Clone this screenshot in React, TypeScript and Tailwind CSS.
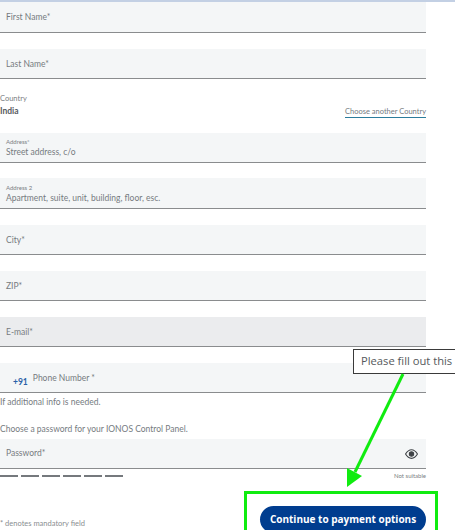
import React from 'react';

const Field = ({ label, small, bg = 'bg-[#f4f6f7]', h = 'h-[30px]', mt }: { label: string; small?: string; bg?: string; h?: string; mt: string }) => (
  <div className={`${mt} ${h} ${bg} w-[426px] border-b border-[#8a8c8e] pl-[6px] flex flex-col justify-center shrink-0`}>
    {small && <span className="text-[6px] leading-[7px] text-[#7b8084] mt-[2px]">{small}</span>}
    <span className="text-[8.5px] leading-[13px] text-[#767b7f] mt-[1px]">{label}</span>
  </div>
);

const App = () => {
  return (
    <div className="relative w-[455px] h-[530px] overflow-hidden bg-white font-['Lato',sans-serif]">
      <div className="h-[2px] bg-[#c3d0e4]" />
      <Field label="First Name*" h="h-[31px]" mt="mt-0" />
      <Field label="Last Name*" mt="mt-[16px]" />

      <div className="w-[426px] mt-[15px] flex justify-between items-end">
        <div>
          <div className="text-[7.5px] leading-[10px] text-[#7b8084]">Country</div>
          <div className="text-[8.5px] leading-[12px] mt-[1px] font-bold text-[#565a5e]">India</div>
        </div>
        <span className="text-[7.5px] leading-[11px] text-[#767b7f] border-b border-[#2c7c9c] mb-[-1px]">Choose another Country</span>
      </div>

      <Field label="Street address, c/o" small="Address*" mt="mt-[16px]" />
      <Field label="Apartment, suite, unit, building, floor, esc." small="Address 2" h="h-[31px]" mt="mt-[15px]" />
      <Field label="City*" mt="mt-[16px]" />
      <Field label="ZIP*" mt="mt-[16px]" />
      <Field label="E-mail*" bg="bg-[#ebecee]" mt="mt-[16px]" />

      <div className="mt-[16px] h-[30px] w-[426px] bg-[#f4f6f7] border-b border-[#8a8c8e] flex shrink-0">
        <span className="ml-[13px] mt-[14px] text-[8.5px] leading-[11px] font-bold text-[#2b62a8]">+91</span>
        <span className="ml-[5px] mt-[9px] text-[8.5px] leading-[12px] text-[#767b7f]">Phone Number *</span>
      </div>

      <div className="mt-[4px] text-[8.5px] leading-[11px] text-[#767b7f]">If additional info is needed.</div>
      <div className="mt-[16px] text-[8.5px] leading-[11px] text-[#767b7f]">Choose a password for your IONOS Control Panel.</div>

      <div className="mt-[4px] h-[30px] w-[426px] bg-[#f4f6f7] border-b border-[#8a8c8e] pl-[6px] pr-[8px] flex items-center justify-between">
        <span className="text-[8.5px] leading-[13px] text-[#767b7f]">Password*</span>
        <svg width="13" height="10" viewBox="0 0 24 18" fill="none" stroke="#3f4347" strokeWidth="2">
          <path d="M1 9c3-5 7-8 11-8s8 3 11 8c-3 5-7 8-11 8S4 14 1 9z" />
          <circle cx="12" cy="9" r="4" fill="#3f4347" />
        </svg>
      </div>

      <div className="w-[426px] mt-[3px] flex items-center gap-[3px]">
        {[0, 1, 2, 3, 4, 5].map((i) => (
          <span key={i} className="w-[18px] h-[2px] bg-[#75797d]" />
        ))}
        <span className="ml-auto text-[6px] leading-[7px] text-[#7b8084]">Not suitable</span>
      </div>

      <div className="w-[426px] mt-[27px] flex items-start justify-between">
        <span className="mt-[13px] text-[7.5px] leading-[10px] text-[#8a8e91]">* denotes mandatory field</span>
        <button className="w-[166px] h-[27px] rounded-full bg-[#003d8f] text-white text-[10px] font-['Open_Sans',sans-serif] font-bold pb-[1px] shrink-0">
          Continue to payment options
        </button>
      </div>

      {/* annotation overlays */}
      <div className="absolute left-[353px] top-[349px] w-[110px] h-[25px] bg-white border border-[#3a3a3a] pl-[7px] flex items-center text-[11.2px] font-['Open_Sans',sans-serif] text-[#55595c] whitespace-nowrap">
        Please fill out this
      </div>
      <svg className="absolute left-0 top-0 pointer-events-none" width="455" height="530">
        <line x1="403" y1="374" x2="355" y2="472" stroke="#10ec10" strokeWidth="3" />
        <polygon points="347,487 347,468 362,476" fill="#10ec10" />
      </svg>
      <div className="absolute left-[244px] top-[491px] w-[194px] h-[45px] border-[3px] border-[#10ec10]" />
    </div>
  );
};

export default App;
